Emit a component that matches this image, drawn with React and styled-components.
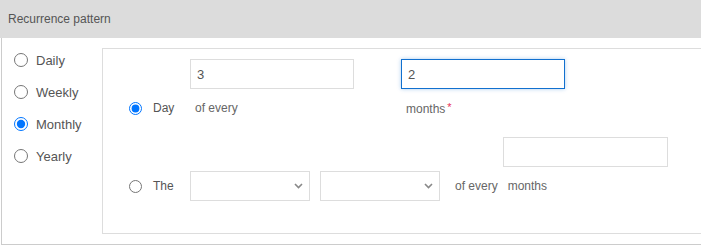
import styled, { createGlobalStyle } from "styled-components";

const GlobalStyle = createGlobalStyle`
  body {
    margin: 0;
    overflow: hidden;
    background: #fff;
    font-family: "Liberation Sans", Arial, sans-serif;
  }
`;

const Panel = styled.div`
  width: 100%;
`;

const Header = styled.div`
  height: 38px;
  line-height: 38px;
  background: #dcdcdc;
  color: #555;
  font-size: 12px;
  padding-left: 8px;
`;

const Body = styled.div`
  display: flex;
  margin-left: 1px;
  border-left: 1px solid #ccc;
  border-bottom: 1px solid #ccc;
  padding: 10px 0 10px 0;
`;

const TypeList = styled.div`
  width: 100px;
  flex: none;
  display: flex;
  flex-direction: column;
  gap: 8px;
  padding-left: 12px;
  box-sizing: border-box;
`;

const Option = styled.label`
  display: flex;
  align-items: center;
  height: 24px;
  gap: 8px;
  color: #555;
  font-size: 13px;
`;

const Radio = styled.input.attrs({ type: "radio" })`
  width: ${(p) => p.$size || 13}px;
  height: ${(p) => p.$size || 13}px;
  margin: 0;
  flex: none;
`;

const Detail = styled.div`
  flex: 1;
  border: 1px solid #ddd;
  border-right: none;
  padding: 10px 0 32px 0;
`;

const DayGrid = styled.div`
  display: grid;
  grid-template-columns: 87px 211px 164px;
  grid-template-rows: 30px 20px;
  row-gap: 9px;
  align-items: center;
`;

const TextInput = styled.input`
  box-sizing: border-box;
  width: ${(p) => p.$w || 164}px;
  height: 30px;
  border: 1px solid ${(p) => (p.$focus ? "#1170cf" : "#ddd")};
  box-shadow: ${(p) => (p.$focus ? "0 0 4px rgba(17, 112, 207, 0.35)" : "none")};
  padding: 0 6px;
  font-family: "Liberation Sans", Arial, sans-serif;
  font-size: 13px;
  color: #555;
  outline: none;
`;

const RadioCell = styled.label`
  display: flex;
  align-items: center;
  gap: 11px;
  padding-left: 26px;
  color: #555;
  font-size: 12px;
`;

const Note = styled.span`
  color: #666;
  font-size: 12px;
  padding-left: ${(p) => p.$pad || 0}px;
`;

const Star = styled.span`
  color: #e8335a;
  font-size: 11px;
  margin-left: 2px;
  vertical-align: 2px;
`;

const ExtraRow = styled.div`
  display: flex;
  padding-left: 400px;
  margin-top: 19px;
`;

const TheRow = styled.div`
  display: flex;
  align-items: center;
  margin-top: 4px;
`;

const FirstCell = styled.div`
  width: 87px;
`;

const SelectBox = styled.div`
  box-sizing: border-box;
  width: 120px;
  height: 30px;
  border: 1px solid #ddd;
  margin-right: ${(p) => p.$mr || 0}px;
  display: flex;
  align-items: center;
  justify-content: flex-end;
  padding-right: 6px;
`;

const Chevron = () => (
  <svg width="9" height="6" viewBox="0 0 9 6">
    <path d="M1 1l3.5 3.5L8 1" fill="none" stroke="#888" strokeWidth="1.6" />
  </svg>
);

export default function App() {
  return (
    <>
      <GlobalStyle />
      <Panel>
        <Header>Recurrence pattern</Header>
        <Body>
          <TypeList>
            <Option>
              <Radio name="type" $size={14} />
              Daily
            </Option>
            <Option>
              <Radio name="type" $size={14} />
              Weekly
            </Option>
            <Option>
              <Radio name="type" $size={14} defaultChecked />
              Monthly
            </Option>
            <Option>
              <Radio name="type" $size={14} />
              Yearly
            </Option>
          </TypeList>
          <Detail>
            <DayGrid>
              <span />
              <TextInput defaultValue="3" />
              <TextInput defaultValue="2" $focus />
              <RadioCell>
                <Radio name="mode" defaultChecked />
                Day
              </RadioCell>
              <Note $pad={5}>of every</Note>
              <Note $pad={5}>
                months<Star>*</Star>
              </Note>
            </DayGrid>
            <ExtraRow>
              <TextInput $w={165} />
            </ExtraRow>
            <TheRow>
              <FirstCell>
                <RadioCell>
                  <Radio name="mode" />
                  The
                </RadioCell>
              </FirstCell>
              <SelectBox $mr={10}>
                <Chevron />
              </SelectBox>
              <SelectBox $mr={15}>
                <Chevron />
              </SelectBox>
              <Note>of every</Note>
              <Note $pad={10}>months</Note>
            </TheRow>
          </Detail>
        </Body>
      </Panel>
    </>
  );
}
